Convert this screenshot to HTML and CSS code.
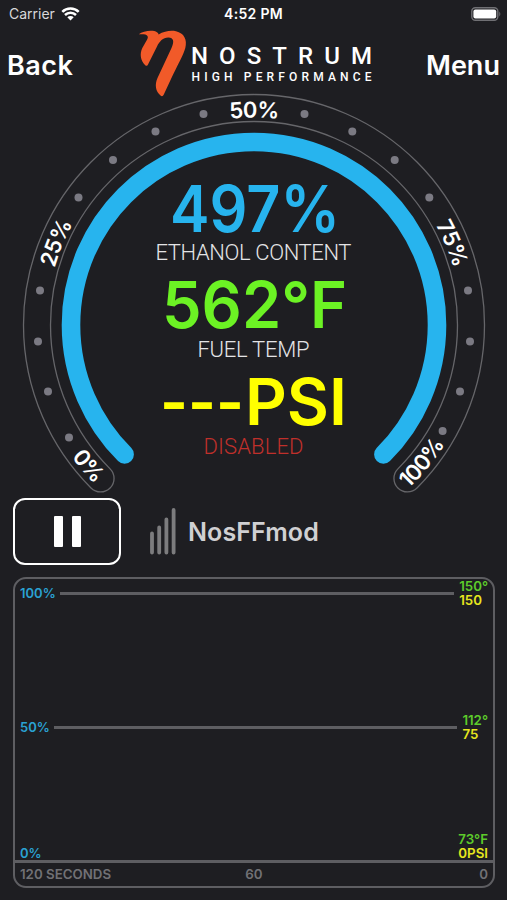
FILE: index.html
```html
<!DOCTYPE html>
<html lang="en">
<head>
    <meta charset="UTF-8">
    <meta name="viewport" content="width=device-width, initial-scale=1.0">
    <title>Nostrum High Performance</title>
    <link rel="stylesheet" href="styles.css">
</head>
<body>
    <div class="status-bar">
        <div class="carrier">
            <span>Carrier</span>
            <svg width="19" height="14" viewBox="0 0 19 14">
                <path d="M1.3 4.8a11.6 11.6 0 0 1 16.4 0M4 8a7.8 7.8 0 0 1 11 0" fill="none" stroke="#fff" stroke-width="2.5"/>
                <path d="M9.5 13.6L6.3 10.3a4.5 4.5 0 0 1 6.4 0z" fill="#fff"/>
            </svg>
        </div>
        <div class="time">4:52 PM</div>
        <svg class="battery" width="30" height="14" viewBox="0 0 30 14">
            <rect x="0.8" y="0.8" width="26" height="12.4" rx="3.5" fill="none" stroke="#707074" stroke-width="1.4"/>
            <rect x="2.4" y="2.4" width="22.8" height="9.2" rx="2" fill="#fff"/>
            <path d="M28.3 4.6q2 2.4 0 4.8z" fill="#707074"/>
        </svg>
    </div>

    <div class="nav">
        <a class="nav-link">Back</a>
        <svg class="logo" width="236" height="70" viewBox="137 28 236 70">
            <path d="M138.8 34.3C143 31 153 29.500 157 32.300Q158.500 33.300 158.600 34.600C164 31 171 30.200 176 31.200C184 33 187.500 39.500 185.300 48C183.500 55 177 66 171 79L163.800 94.500Q162.500 97.500 160.500 95.500C155.500 91.500 154.500 84.500 157.500 78L171.500 48C174.500 41.500 173.500 37.800 168.500 37.600C163 37.500 159.500 41.500 157 46.500L148 64.500Q147 66.800 145 64.900C140.500 60.500 139.500 54 142.300 48L147 39.800C149.500 35.500 146.500 33.500 138.800 34.300z" fill="#f15a29"/>
            <text class="logo-name" x="191" y="64" textLength="181">NOSTRUM</text>
            <text class="logo-sub" x="191.500" y="81" textLength="180">HIGH PERFORMANCE</text>
        </svg>
        <a class="nav-link">Menu</a>
    </div>

    <svg class="gauge" width="507" height="402" viewBox="0 92 507 402">
        <defs>
            <path id="scaleTop" d="M46.500 325A207.500 207.500 0 0 1 461.500 325"/>
            <path id="scaleBottom" d="M29 325A225 225 0 0 0 479 325"/>
        </defs>
        <path class="track" d="M91 488A230.500 230.500 0 1 1 417 488A13.500 13.500 0 0 1 397.900 468.900A203.500 203.500 0 1 0 110.100 468.900A13.500 13.500 0 0 1 91 488z"/>
        <path class="bar" d="M124.600 454.400A183 183 0 1 1 383.400 454.400"/>
        <g class="ticks">
            <circle cx="69" cy="437.500" r="4"/>
            <circle cx="48" cy="391.500" r="4"/>
            <circle cx="38" cy="341.500" r="4"/>
            <circle cx="40" cy="290.500" r="4"/>
            <circle cx="78.500" cy="197.500" r="4"/>
            <circle cx="113" cy="160" r="4"/>
            <circle cx="155.500" cy="131.500" r="4"/>
            <circle cx="203.500" cy="114" r="4"/>
            <circle cx="304.500" cy="114" r="4"/>
            <circle cx="352.300" cy="131.500" r="4"/>
            <circle cx="394.700" cy="160" r="4"/>
            <circle cx="429.300" cy="197.500" r="4"/>
            <circle cx="468" cy="290.500" r="4"/>
            <circle cx="470" cy="341.500" r="4"/>
            <circle cx="460" cy="391.500" r="4"/>
            <circle cx="442.600" cy="431" r="4"/>
        </g>
        <g class="scale">
            <text><textPath href="#scaleBottom" startOffset="22.4%">0%</textPath></text>
            <text><textPath href="#scaleTop" startOffset="12.5%">25%</textPath></text>
            <text><textPath href="#scaleTop" startOffset="50%">50%</textPath></text>
            <text><textPath href="#scaleTop" startOffset="87.5%">75%</textPath></text>
            <text><textPath href="#scaleBottom" startOffset="78.1%">100%</textPath></text>
        </g>
        <text class="value ethanol" x="170" y="231.500" textLength="170" lengthAdjust="spacingAndGlyphs">497%</text>
        <text class="label" x="155.500" y="259.500" textLength="196">ETHANOL CONTENT</text>
        <text class="value temp" x="162" y="328" textLength="185" lengthAdjust="spacingAndGlyphs">562°F</text>
        <text class="label" x="197.500" y="356.500" textLength="112">FUEL TEMP</text>
        <text class="value pressure" x="160" y="424.700" textLength="84" lengthAdjust="spacingAndGlyphs">---</text>
        <text class="value pressure" x="245" y="424.700" textLength="102" lengthAdjust="spacingAndGlyphs">PSI</text>
        <text class="label disabled" x="203.500" y="453.500" textLength="100">DISABLED</text>
    </svg>

    <div class="controls">
        <button class="pause" aria-label="Pause">
            <span></span>
            <span></span>
        </button>
        <svg class="signal" width="26" height="47" viewBox="0 0 26 47">
            <path d="M2 25.500V44.500M9.200 19.500V44.500M16.400 11.500V44.500M23.600 2V44.500" stroke="#7c7c7e" stroke-width="3.800" stroke-linecap="round"/>
        </svg>
        <div class="device">NosFFmod</div>
    </div>

    <div class="chart">
        <div class="plot">
            <div class="row">
                <span class="percent">100%</span>
                <span class="line"></span>
                <span class="scale-values"><span class="green">150°</span><span class="yellow">150</span></span>
            </div>
            <div class="row">
                <span class="percent">50%</span>
                <span class="line"></span>
                <span class="scale-values"><span class="green">112°</span><span class="yellow">75</span></span>
            </div>
            <div class="row last">
                <span class="percent">0%</span>
                <span class="scale-values"><span class="green">73°F</span><span class="yellow">0PSI</span></span>
            </div>
        </div>
        <div class="axis">
            <span>120 SECONDS</span>
            <span>60</span>
            <span>0</span>
        </div>
    </div>
</body>
</html>
```

FILE: styles.css
```css
* {
    box-sizing: border-box;
}
body {
    margin: 0;
    width: 507px;
    height: 900px;
    overflow: hidden;
    background-color: #1e1e22;
    color: #fff;
    font-family: Inter, "Liberation Sans", sans-serif;
}
.status-bar {
    display: grid;
    grid-template-columns: 1fr auto 1fr;
    align-items: center;
    height: 27px;
    padding: 0 6px 0 9px;
    font-size: 14px;
}
.carrier {
    display: flex;
    align-items: center;
    gap: 6px;
    color: #d8d8da;
}
.time {
    margin-right: 3px;
    font-weight: 600;
    letter-spacing: 0.3px;
}
.battery {
    justify-self: end;
}
.nav {
    display: flex;
    justify-content: space-between;
    height: 70px;
    margin-top: 1px;
    padding: 0 7px 0 7px;
}
.nav-link {
    width: 74px;
    padding-top: 21px;
    font-size: 27px;
    font-weight: 600;
    line-height: 34px;
}
.nav-link:first-child {
    width: 130px;
    letter-spacing: 0.5px;
}
.logo {
    margin-right: auto;
}
.logo-name {
    fill: #fff;
    font-family: Roboto, sans-serif;
    font-size: 24px;
    font-weight: 500;
}
.logo-sub {
    fill: #fff;
    font-family: Roboto, sans-serif;
    font-size: 12px;
    font-weight: 500;
}
.gauge {
    display: block;
    margin-top: -6px;
}
.track {
    fill: none;
    stroke: #66666a;
    stroke-width: 1.3;
}
.bar {
    fill: none;
    stroke: #27b4ee;
    stroke-width: 18.6;
    stroke-linecap: round;
}
.ticks {
    fill: #7b7a83;
}
.scale {
    fill: #fff;
    font-size: 22px;
    font-weight: 600;
    letter-spacing: -0.8px;
    text-anchor: middle;
}
.value {
    font-size: 64px;
    font-weight: 600;
}
.ethanol {
    fill: #27b4ee;
}
.temp {
    fill: #6cf224;
}
.pressure {
    fill: #ffff00;
}
.label {
    fill: #e4e4e6;
    font-family: Roboto, sans-serif;
    font-size: 22px;
    font-weight: 300;
}
.disabled {
    fill: #c0302b;
}
.controls {
    display: flex;
    align-items: center;
    height: 67px;
    margin-top: 4px;
    padding-left: 13px;
}
.pause {
    display: flex;
    align-items: center;
    justify-content: center;
    gap: 9px;
    width: 108px;
    height: 67px;
    padding: 0;
    border: 2px solid #fff;
    border-radius: 12px;
    background: none;
}
.pause span {
    width: 9px;
    height: 31px;
    border-radius: 1px;
    background-color: #fff;
}
.signal {
    margin-left: 29px;
}
.device {
    margin-left: 12px;
    color: #d0d0d2;
    font-size: 25px;
    font-weight: 600;
    letter-spacing: 0.1px;
}
.chart {
    width: 482px;
    height: 311px;
    margin: 12px 0 0 13px;
    border: 2px solid #5e5e62;
    border-radius: 13px;
    font-size: 13.3px;
    font-weight: 600;
}
.plot {
    display: flex;
    flex-direction: column;
    height: 284px;
    padding: 0 5px 0 5px;
    border-bottom: 3px solid #5e5e62;
}
.row {
    display: flex;
    align-items: center;
    height: 28px;
    line-height: 14px;
}
.row + .row {
    margin-top: 106px;
}
.row + .last {
    align-items: flex-end;
    justify-content: space-between;
    margin-top: auto;
}
.percent {
    color: #2aa2d3;
    font-size: 13px;
}
.line {
    flex: 1;
    height: 3px;
    margin: 0 5px 0 4px;
    background-color: #5e5e62;
}
.scale-values {
    display: flex;
    flex-direction: column;
}
.green {
    color: #5dcb2b;
}
.yellow {
    color: #e6e61e;
}
.axis {
    display: grid;
    grid-template-columns: 1fr auto 1fr;
    align-items: center;
    height: 21px;
    padding: 0 5px;
    color: #717175;
}
.axis span:last-child {
    text-align: right;
}
```
